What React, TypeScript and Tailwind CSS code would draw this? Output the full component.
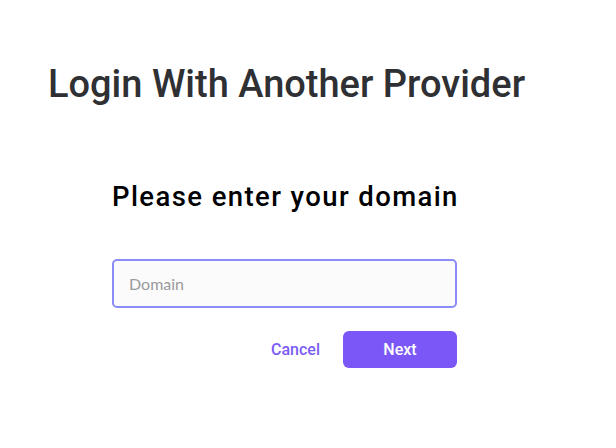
export default function App() {
  return (
    <div className="w-[616px] h-[448px] bg-white overflow-hidden" style={{ fontFamily: 'Roboto, "Liberation Sans", sans-serif' }}>
      <div className="pt-[60px] pl-[48px]">
        <h1 className="text-[38px] leading-[48px] text-[#2f3033] tracking-[0px] font-medium whitespace-nowrap">Login With Another Provider</h1>
      </div>
      <div className="ml-[112px] w-[345px] mt-[72px] flex flex-col">
        <h2 className="text-[27.5px] leading-[34px] text-black font-medium tracking-[1.4px] whitespace-nowrap">Please enter your domain</h2>
        <div className="mt-[45px] h-[49px] rounded-[5px] border-2 border-[#8c8cf7] bg-[#fbfbfb] flex items-center px-[15px]">
          <span className="text-[16px] text-[#9a9a9a]" style={{ fontFamily: 'Lato, sans-serif' }}>Domain</span>
        </div>
        <div className="mt-[23px] flex justify-end items-center gap-[23px]">
          <button className="text-[16px] font-medium text-[#7b5cf5]">Cancel</button>
          <button className="w-[114px] h-[37px] rounded-[6px] bg-[#7b57f7] text-white text-[16px] font-medium">Next</button>
        </div>
      </div>
    </div>
  );
}
